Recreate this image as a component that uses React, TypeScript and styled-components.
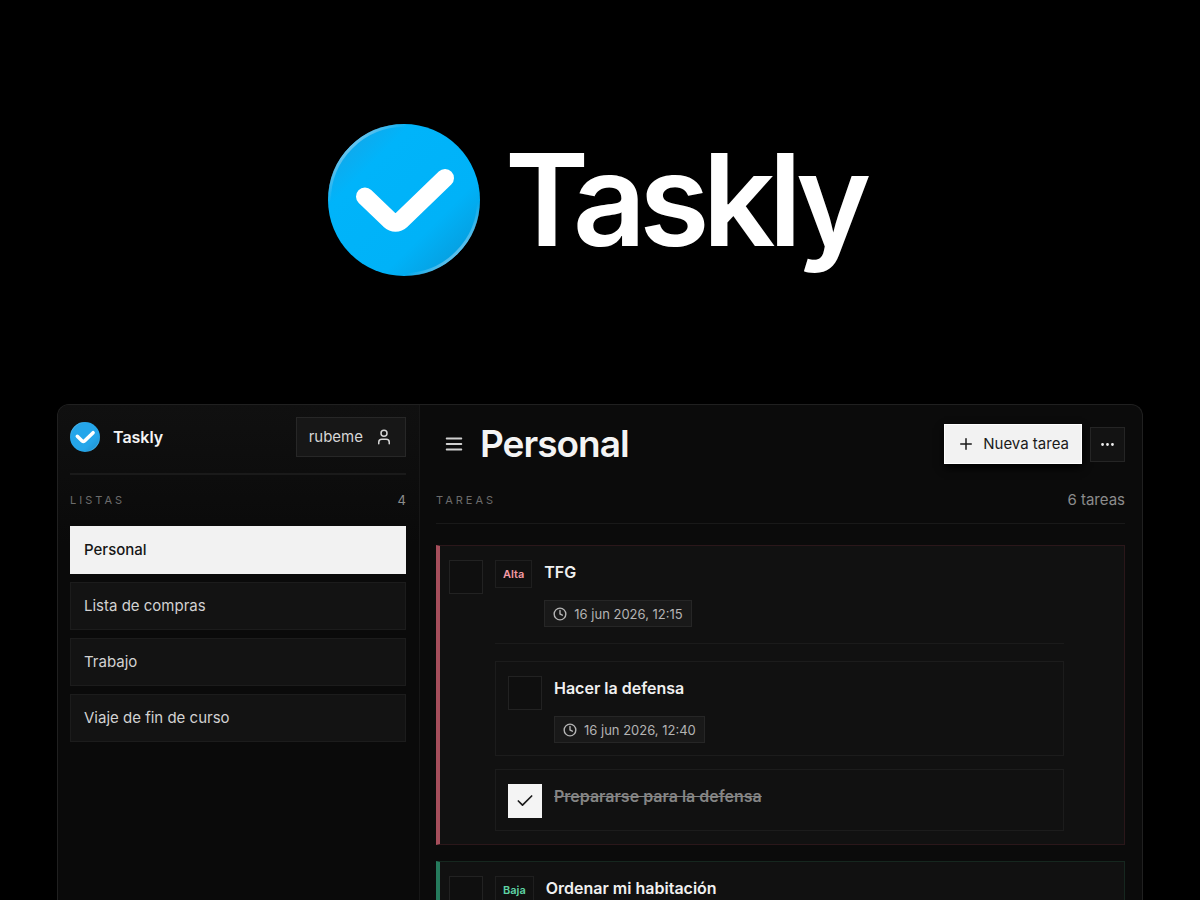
import React, { useId, useState } from 'react';
import styled, { createGlobalStyle, css } from 'styled-components';

const GlobalStyle = createGlobalStyle`
  *, *::before, *::after { box-sizing: border-box; }
  body { margin: 0; background: #000; }
  button, input { font: inherit; }
`;

const Page = styled.div`
  display: flex;
  flex-direction: column;
  height: 100vh;
  overflow: hidden;
  background: #000;
  color: #f4f4f4;
  font-family: Inter, 'Liberation Sans', sans-serif;
  font-size: 15px;
  line-height: 24px;
`;

const Hero = styled.header`
  display: flex;
  flex-shrink: 0;
  align-items: center;
  justify-content: center;
  gap: 25px;
  padding: 122px 8px 126px 0;
`;

const HeroTitle = styled.h1`
  margin: 0;
  color: #fff;
  font-size: 128px;
  font-weight: 600;
  line-height: 156px;
  letter-spacing: -7px;
`;

const Panel = styled.div`
  display: grid;
  grid-template-columns: 362px minmax(0, 1fr);
  flex: 1;
  min-height: 0;
  margin: 0 57px;
  overflow: hidden;
  border: 1px solid #202020;
  border-bottom: 0;
  border-radius: 12px 12px 0 0;
  background: #0b0b0b;
`;

const Sidebar = styled.aside`
  padding: 12px 13px 12px 12px;
  border-right: 1px solid #171717;
  background: linear-gradient(#101010, #0a0a0a 140px);
`;

const SidebarTop = styled.div`
  display: flex;
  align-items: center;
  justify-content: space-between;
  padding-bottom: 16px;
  border-bottom: 2px solid #1a1a1a;
`;

const Brand = styled.div`
  display: flex;
  align-items: center;
  gap: 13px;
  font-size: 16px;
  font-weight: 600;
`;

const UserButton = styled.button`
  display: flex;
  align-items: center;
  gap: 12px;
  height: 40px;
  padding: 0 12px;
  border: 1px solid #272727;
  background: #171717;
  color: #d6d6d6;
`;

const SectionHead = styled.div<{ $ruled?: boolean }>`
  display: flex;
  align-items: center;
  justify-content: space-between;
  color: #8c8c8c;
  ${(p) =>
    p.$ruled
      ? css`
          padding-bottom: 11px;
          border-bottom: 1px solid #191919;
        `
      : css`
          padding: 13px 0 14px;
          font-size: 13px;
        `}
`;

const Eyebrow = styled.h2`
  margin: 0;
  color: #6c6c6c;
  font-size: 11px;
  font-weight: 400;
  letter-spacing: 3px;
  text-transform: uppercase;
`;

const Lists = styled.nav`
  display: grid;
  gap: 8px;
`;

const ListLink = styled.a<{ $active?: boolean }>`
  display: block;
  padding: 11px 13px;
  border: 1px solid ${(p) => (p.$active ? '#f2f2f2' : '#1c1c1c')};
  background: ${(p) => (p.$active ? '#f2f2f2' : '#131313')};
  color: ${(p) => (p.$active ? '#161616' : '#d2d2d2')};
  font-weight: ${(p) => (p.$active ? 500 : 400)};
  text-decoration: none;
`;

const Main = styled.main`
  padding: 19px 17px 0 16px;
`;

const Toolbar = styled.div`
  display: flex;
  align-items: center;
  justify-content: space-between;
  margin-bottom: 24px;
`;

const Cluster = styled.div`
  display: flex;
  align-items: center;
  gap: 8px;
`;

const MenuButton = styled.button`
  display: flex;
  align-items: center;
  justify-content: center;
  width: 36px;
  height: 36px;
  padding: 0;
  border: 0;
  background: none;
  color: #d0d0d0;
`;

const ListTitle = styled.h1`
  margin: 0;
  font-size: 37px;
  font-weight: 600;
  line-height: 40px;
  letter-spacing: -1px;
`;

const NewTask = styled.button`
  display: flex;
  align-items: center;
  gap: 8px;
  height: 40px;
  padding: 0 12px;
  border: 1px solid #fff;
  background: #f2f2f2;
  color: #1a1a1a;
  box-shadow: 0 4px 8px #000;
`;

const MoreButton = styled(MenuButton)`
  width: 35px;
  height: 35px;
  border: 1px solid #252525;
  background: #131313;
  color: #eee;
`;

const Tasks = styled.div`
  display: grid;
  gap: 16px;
  padding-top: 21px;
`;

const tones = {
  high: { bar: '#a54e5b', edge: '#2b171a', text: '#f39aa5' },
  low: { bar: '#257a5c', edge: '#16271f', text: '#5fd3a4' },
};
type Tone = keyof typeof tones;

const Card = styled.article<{ $tone: Tone }>`
  display: flex;
  align-items: flex-start;
  gap: 12px;
  padding: 14px 60px 13px 9px;
  border: 1px solid ${(p) => tones[p.$tone].edge};
  border-left: 4px solid ${(p) => tones[p.$tone].bar};
  background: #111;
`;

const CardBody = styled.div`
  flex: 1;
  min-width: 0;
`;

const Row = styled.div`
  display: flex;
  align-items: flex-start;
  gap: 12px;
`;

const Badge = styled.span<{ $tone: Tone }>`
  padding: 1px 7px;
  border: 1px solid #1f1f1f;
  color: ${(p) => tones[p.$tone].text};
  font-size: 11px;
  font-weight: 600;
`;

const TaskText = styled.div`
  display: flex;
  flex-direction: column;
  align-items: flex-start;
  gap: 16px;
`;

const TaskLabel = styled.label<{ $done?: boolean }>`
  color: ${(p) => (p.$done ? '#858585' : '#f0f0f0')};
  font-size: 16px;
  font-weight: 600;
  text-decoration: ${(p) => (p.$done ? 'line-through' : 'none')};
`;

const DueChip = styled.span`
  display: flex;
  align-items: center;
  gap: 7px;
  height: 27px;
  padding: 0 8px;
  border: 1px solid #262626;
  background: #191919;
  color: #b4b4b4;
  font-size: 13px;
`;

const Subtasks = styled.div`
  display: grid;
  gap: 13px;
  margin-top: 16px;
  padding-top: 17px;
  border-top: 1px solid #1b1b1b;
`;

const Subtask = styled(Row)`
  padding: 14px 12px 12px;
  border: 1px solid #1c1c1c;
`;

const TickWrap = styled.span`
  display: grid;
  flex-shrink: 0;
  width: 34px;
  height: 34px;
  place-items: center;
  color: #1a1a1a;

  > * { grid-area: 1 / 1; }
  > svg { pointer-events: none; }
`;

const Tick = styled.input`
  width: 34px;
  height: 34px;
  margin: 0;
  appearance: none;
  border: 1px solid #222;
  background: #0f0f0f;

  &:checked {
    border-color: #f4f4f4;
    background: #f4f4f4;
  }
`;

function Logo({ size }: { size: number }) {
  const id = useId();
  const small = size < 60;
  return (
    <svg width={size} height={size} viewBox="0 0 152 152" aria-hidden="true">
      <defs>
        <linearGradient id={`${id}f`} x1="0.1" y1="0.1" x2="0.9" y2="0.9">
          <stop offset="0" stopColor={small ? '#2ba4e6' : '#14a6e8'} />
          <stop offset="0.22" stopColor={small ? '#25a6ea' : '#00b4fa'} />
          <stop offset="0.72" stopColor={small ? '#25a6ea' : '#00b2f8'} />
          <stop offset="1" stopColor={small ? '#1f93d3' : '#079cdc'} />
        </linearGradient>
        <linearGradient id={`${id}r`} x1="0.1" y1="0.1" x2="0.9" y2="0.9">
          <stop offset="0.04" stopColor="#6cc6ee" />
          <stop offset="0.2" stopColor="#6cc6ee" stopOpacity="0" />
          <stop offset="0.82" stopColor="#6cc6ee" stopOpacity="0" />
          <stop offset="0.97" stopColor="#6cc6ee" />
        </linearGradient>
      </defs>
      <circle cx="76" cy="76" r="76" fill={`url(#${id}f)`} />
      <circle cx="76" cy="76" r="74.5" fill="none" stroke={`url(#${id}r)`} strokeWidth="3" />
      <path
        d="M37 72.500 L61.500 96 Q67.500 101.500 73.500 96 L117 54"
        fill="none"
        stroke="#fff"
        strokeWidth="18"
        strokeLinecap="round"
        strokeLinejoin="round"
      />
    </svg>
  );
}

function Icon({ size, stroke = 2, children }: { size: number; stroke?: number; children: React.ReactNode }) {
  return (
    <svg
      width={size}
      height={size}
      viewBox="0 0 24 24"
      fill="none"
      stroke="currentColor"
      strokeWidth={stroke}
      strokeLinecap="round"
      strokeLinejoin="round"
      aria-hidden="true"
    >
      {children}
    </svg>
  );
}

function TickBox({ id, done }: { id: string; done?: boolean }) {
  const [checked, setChecked] = useState(!!done);
  return (
    <TickWrap>
      <Tick id={id} type="checkbox" checked={checked} onChange={(e) => setChecked(e.target.checked)} />
      {checked && (
        <Icon size={20}>
          <path d="M20 6 9 17l-5-5" />
        </Icon>
      )}
    </TickWrap>
  );
}

function Due({ children }: { children: string }) {
  return (
    <DueChip>
      <Icon size={14} stroke={2.4}>
        <circle cx="12" cy="12" r="10" />
        <path d="M12 6v6l4 2" />
      </Icon>
      {children}
    </DueChip>
  );
}

function TaskInfo({ id, title, due, done }: { id: string; title: string; due?: string; done?: boolean }) {
  return (
    <TaskText>
      <TaskLabel htmlFor={id} $done={done}>{title}</TaskLabel>
      {due && <Due>{due}</Due>}
    </TaskText>
  );
}

const lists = ['Personal', 'Lista de compras', 'Trabajo', 'Viaje de fin de curso'];

const tasks: {
  id: string;
  title: string;
  tone: Tone;
  level: string;
  due?: string;
  subtasks?: { id: string; title: string; due?: string; done?: boolean }[];
}[] = [
  {
    id: 'tfg',
    title: 'TFG',
    tone: 'high',
    level: 'Alta',
    due: '16 jun 2026, 12:15',
    subtasks: [
      { id: 'defensa', title: 'Hacer la defensa', due: '16 jun 2026, 12:40' },
      { id: 'preparar', title: 'Prepararse para la defensa', done: true },
    ],
  },
  { id: 'ordenar', title: 'Ordenar mi habitación', tone: 'low', level: 'Baja' },
];

export default function App() {
  return (
    <Page>
      <GlobalStyle />
      <Hero>
        <Logo size={152} />
        <HeroTitle>Taskly</HeroTitle>
      </Hero>
      <Panel>
        <Sidebar>
          <SidebarTop>
            <Brand>
              <Logo size={30} />
              Taskly
            </Brand>
            <UserButton type="button">
              rubeme
              <Icon size={18}>
                <path d="M19 21v-2a4 4 0 0 0-4-4H9a4 4 0 0 0-4 4v2" />
                <circle cx="12" cy="7" r="4" />
              </Icon>
            </UserButton>
          </SidebarTop>
          <SectionHead>
            <Eyebrow>Listas</Eyebrow>
            <span>4</span>
          </SectionHead>
          <Lists>
            {lists.map((name, i) => (
              <ListLink key={name} href="#" $active={i === 0}>{name}</ListLink>
            ))}
          </Lists>
        </Sidebar>
        <Main>
          <Toolbar>
            <Cluster>
              <MenuButton type="button" aria-label="Menú">
                <Icon size={22}>
                  <path d="M4 6h16M4 12h16M4 18h16" />
                </Icon>
              </MenuButton>
              <ListTitle>Personal</ListTitle>
            </Cluster>
            <Cluster>
              <NewTask type="button">
                <Icon size={18}>
                  <path d="M5 12h14M12 5v14" />
                </Icon>
                Nueva tarea
              </NewTask>
              <MoreButton type="button" aria-label="Más opciones">
                <Icon size={17}>
                  <circle cx="5" cy="12" r="1" />
                  <circle cx="12" cy="12" r="1" />
                  <circle cx="19" cy="12" r="1" />
                </Icon>
              </MoreButton>
            </Cluster>
          </Toolbar>
          <SectionHead $ruled>
            <Eyebrow>Tareas</Eyebrow>
            <span>6 tareas</span>
          </SectionHead>
          <Tasks>
            {tasks.map((t) => (
              <Card key={t.id} $tone={t.tone}>
                <TickBox id={t.id} />
                <CardBody>
                  <Row>
                    <Badge $tone={t.tone}>{t.level}</Badge>
                    <TaskInfo id={t.id} title={t.title} due={t.due} />
                  </Row>
                  {t.subtasks && (
                    <Subtasks>
                      {t.subtasks.map((s) => (
                        <Subtask key={s.id}>
                          <TickBox id={s.id} done={s.done} />
                          <TaskInfo {...s} />
                        </Subtask>
                      ))}
                    </Subtasks>
                  )}
                </CardBody>
              </Card>
            ))}
          </Tasks>
        </Main>
      </Panel>
    </Page>
  );
}
